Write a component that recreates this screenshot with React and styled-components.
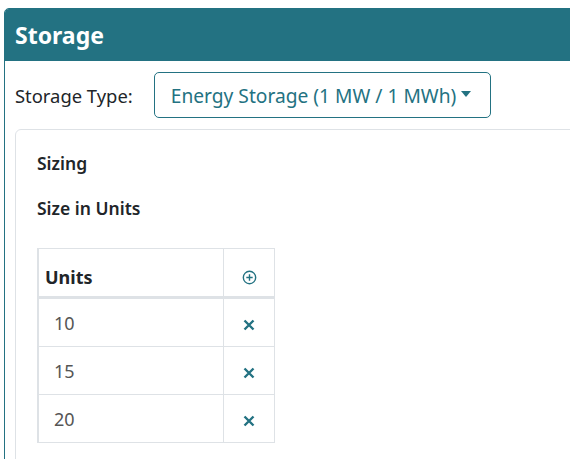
import React from "react";
import styled, { createGlobalStyle } from "styled-components";

const teal = "#237282";

const Global = createGlobalStyle`
  html, body { margin: 0; padding: 0; background: #fff; overflow: hidden; }
  body { font-family: "Noto Sans", "Open Sans", sans-serif; color: #212529; }
`;

const Page = styled.div`
  padding: 8px 0 0 4px;
  width: 640px;
  height: 451px;
  overflow: hidden;
`;

const Card = styled.div`
  border: 1px solid ${teal};
  border-radius: 5px;
  overflow: hidden;
  height: 480px;
`;

const Header = styled.div`
  background: ${teal};
  color: #fff;
  height: 52px;
  display: flex;
  align-items: center;
  padding: 0 10px;
  font-size: 23px;
  font-weight: 700;
`;

const Body = styled.div`
  padding: 11px 10px 0;
`;

const Row = styled.div`
  display: flex;
  align-items: center;
  gap: 21px;
`;

const Label = styled.label`
  font-size: 18.4px;
  color: #212529;
`;

const Select = styled.div`
  display: flex;
  align-items: center;
  gap: 5px;
  height: 46px;
  box-sizing: border-box;
  padding: 0 19px 0 16px;
  border: 1px solid ${teal};
  border-radius: 5px;
  color: ${teal};
  font-size: 19.2px;
`;

const Caret = styled.span`
  width: 0;
  height: 0;
  border-left: 5.5px solid transparent;
  border-right: 5.5px solid transparent;
  border-top: 6px solid ${teal};
  margin-top: -3px;
`;

const Inner = styled.div`
  margin-top: 11px;
  border: 1px solid #dee2e6;
  border-radius: 6px;
  padding: 21px 21px 0;
  height: 400px;
`;

const Title = styled.div`
  font-size: 17.5px;
  font-weight: 600;
  line-height: 24px;
  margin-bottom: ${(p) => p.mb}px;
`;

const Table = styled.table`
  border-collapse: collapse;
  border: 1px solid #dee2e6;
  border-left-width: 2px;
  width: 238px;
  font-size: 18px;
`;

const Th = styled.th`
  text-align: ${(p) => (p.center ? "center" : "left")};
  vertical-align: bottom;
  height: 49px;
  padding: 0 6px 7px;
  box-sizing: border-box;
  border: 1px solid #dee2e6;
  border-bottom: 3px solid #dee2e6;
  font-weight: 700;
  line-height: 24px;
  color: #212529;
  width: ${(p) => (p.w ? p.w + "px" : "auto")};
`;

const Td = styled.td`
  height: 47px;
  padding: 0 15px;
  border: 1px solid #dee2e6;
  color: #555;
  text-align: ${(p) => (p.center ? "center" : "left")};
`;

const IconBox = styled.span`
  display: flex;
  justify-content: center;
  align-items: center;
  height: 24px;
  margin-top: ${(p) => p.mt || 0}px;
`;

const PlusCircle = () => (
  <svg width="15" height="15" viewBox="0 0 16 16">
    <circle cx="8" cy="8" r="6.6" fill="none" stroke={teal} strokeWidth="1.5" />
    <path d="M8 4.6v6.8M4.6 8h6.8" stroke={teal} strokeWidth="1.5" />
  </svg>
);

const XIcon = () => (
  <svg width="12" height="12" viewBox="0 0 12 12">
    <path d="M1.5 1.5l9 9M10.5 1.5l-9 9" stroke={teal} strokeWidth="2.4" />
  </svg>
);

export default function App() {
  const rows = [10, 15, 20];
  return (
    <>
      <Global />
      <Page>
        <Card>
          <Header>Storage</Header>
          <Body>
            <Row>
              <Label>Storage Type:</Label>
              <Select>
                Energy Storage (1 MW / 1 MWh)
                <Caret />
              </Select>
            </Row>
            <Inner>
              <Title mb={21}>Sizing</Title>
              <Title mb={28}>Size in Units</Title>
              <Table>
                <thead>
                  <tr>
                    <Th>Units</Th>
                    <Th center w={51}>
                      <IconBox mt={-2}>
                        <PlusCircle />
                      </IconBox>
                    </Th>
                  </tr>
                </thead>
                <tbody>
                  {rows.map((r) => (
                    <tr key={r}>
                      <Td>{r}</Td>
                      <Td center>
                        <IconBox mt={4}>
                          <XIcon />
                        </IconBox>
                      </Td>
                    </tr>
                  ))}
                </tbody>
              </Table>
            </Inner>
          </Body>
        </Card>
      </Page>
    </>
  );
}
